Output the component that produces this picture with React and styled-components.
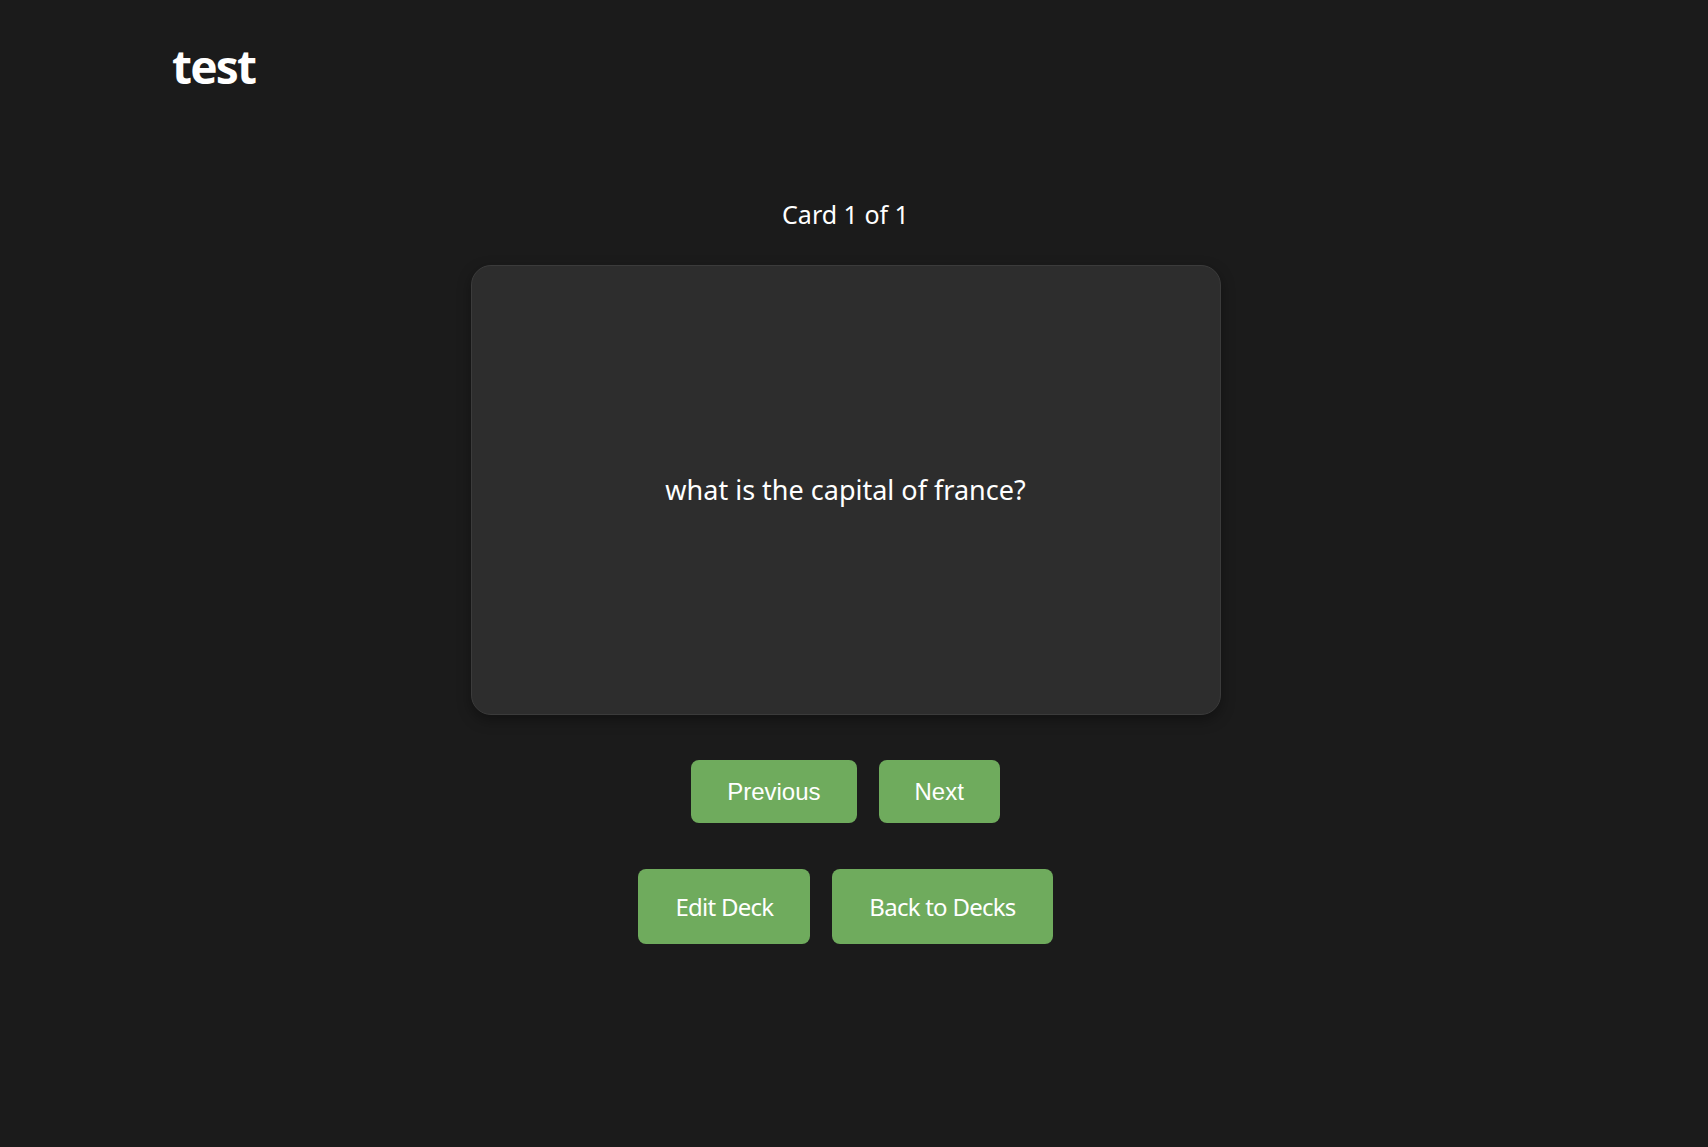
import React from "react";
import styled, { createGlobalStyle } from "styled-components";

const GlobalStyle = createGlobalStyle`
  html, body {
    margin: 0;
    padding: 0;
    background-color: #1b1b1b;
  }
  body {
    font-family: "Noto Sans", "Open Sans", sans-serif;
    color: #ffffff;
  }
`;

const Page = styled.div`
  min-height: 100vh;
  box-sizing: border-box;
  padding-right: 17px;
  background-color: #1b1b1b;
`;

const Header = styled.header`
  padding: 38px 0 0 172px;
`;

const Title = styled.h1`
  margin: 0;
  font-size: 46px;
  line-height: 56px;
  font-weight: 700;
  letter-spacing: -1.8px;
`;

const Study = styled.main`
  display: flex;
  flex-direction: column;
  align-items: center;
  padding-top: 104px;
`;

const Counter = styled.p`
  margin: 0;
  font-size: 25px;
  line-height: 32px;
`;

const Flashcard = styled.div`
  margin-top: 35px;
  width: 750px;
  height: 450px;
  box-sizing: border-box;
  display: flex;
  align-items: center;
  justify-content: center;
  background-color: #2d2d2d;
  border: 1px solid #3b3b3b;
  border-radius: 20px;
  box-shadow: 0 5px 14px rgba(0, 0, 0, 0.35);
  cursor: pointer;
`;

const Question = styled.p`
  margin: 0;
  font-size: 27px;
  line-height: 34px;
`;

const Row = styled.div`
  display: flex;
  gap: 22px;
  margin-top: ${(props) => props.$top}px;
`;

const NavButton = styled.button`
  height: 63px;
  padding: 0 36px;
  border: none;
  border-radius: 8px;
  background-color: #6fab5d;
  color: #ffffff;
  font-family: "Liberation Sans", Arial, sans-serif;
  font-size: 24px;
  cursor: pointer;
`;

const ActionButton = styled.button`
  height: 75px;
  padding: 0 37px;
  border: none;
  border-radius: 8px;
  background-color: #6fab5d;
  color: #ffffff;
  font-family: inherit;
  font-size: 24px;
  letter-spacing: -0.75px;
  cursor: pointer;
`;

export default function App() {
  return (
    <Page>
      <GlobalStyle />
      <Header>
        <Title>test</Title>
      </Header>
      <Study>
        <Counter>Card 1 of 1</Counter>
        <Flashcard>
          <Question>what is the capital of france?</Question>
        </Flashcard>
        <Row $top={45}>
          <NavButton>Previous</NavButton>
          <NavButton>Next</NavButton>
        </Row>
        <Row $top={46}>
          <ActionButton>Edit Deck</ActionButton>
          <ActionButton>Back to Decks</ActionButton>
        </Row>
      </Study>
    </Page>
  );
}
